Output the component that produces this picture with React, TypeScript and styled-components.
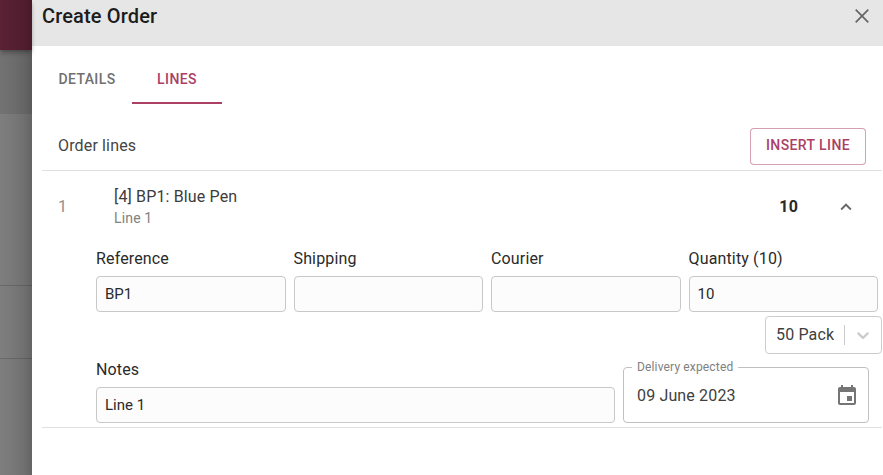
import React from "react";
import styled, { createGlobalStyle } from "styled-components";

const accent = "#ab3f66";

const GlobalStyle = createGlobalStyle`
  *, *::before, *::after { box-sizing: border-box; }
  body {
    margin: 0;
    overflow: hidden;
    font-family: Roboto, sans-serif;
    font-size: 16px;
    line-height: 24px;
    letter-spacing: 0.00938em;
    color: #2a2a2a;
  }
`;

const Screen = styled.div`
  display: grid;
  grid-template-columns: 32px 1fr;
  height: 475px;
  background: #fff;
`;

const Backdrop = styled.div`
  position: relative;
  display: flex;
  flex-direction: column;
  background: #808080;
  &::after {
    content: "";
    position: absolute;
    inset: 0;
    background: linear-gradient(90deg, rgba(0, 0, 0, 0.01), rgba(0, 0, 0, 0.07) 45%, rgba(0, 0, 0, 0.13) 75%, rgba(0, 0, 0, 0.22));
  }
`;

const AppBar = styled.div`
  height: 50px;
  flex: none;
  background: #5c2135;
  box-shadow: 0 2px 4px -1px rgba(0, 0, 0, 0.3), 0 4px 5px rgba(0, 0, 0, 0.12);
  z-index: 0;
`;

const BackdropRow = styled.div<{ $height: number; $shade?: string }>`
  flex: none;
  height: ${(p) => p.$height}px;
  background: ${(p) => p.$shade ?? "transparent"};
  border-bottom: ${(p) => (p.$shade ? "none" : "1px solid #6c6c6c")};
`;

const Drawer = styled.main`
  min-width: 0;
  display: flex;
  flex-direction: column;
`;

const Header = styled.header`
  height: 46px;
  flex: none;
  display: flex;
  justify-content: space-between;
  align-items: flex-start;
  padding: 4px 13px 0 10px;
  background: #e6e6e6;
`;

const Title = styled.h1`
  margin: 0;
  font-size: 20px;
  font-weight: 500;
  line-height: 24px;
  letter-spacing: 0.0075em;
  color: #1c1c1c;
`;

const IconButton = styled.button<{ $top?: number }>`
  display: flex;
  align-items: flex-start;
  padding: 0;
  border: 0;
  margin-top: ${(p) => p.$top ?? 0}px;
  background: none;
  color: #666;
`;

const Content = styled.div`
  padding: 10px 1px 0 10px;
`;

const Tabs = styled.nav`
  display: flex;
  height: 48px;
`;

const Tab = styled.button<{ $active?: boolean }>`
  width: 90px;
  padding: 0 0 2px;
  border: 0;
  border-top: 2px solid transparent;
  border-bottom: 2px solid ${(p) => (p.$active ? accent : "transparent")};
  background: none;
  color: ${(p) => (p.$active ? accent : "#707070")};
  font: 500 14px/18px Roboto, sans-serif;
  letter-spacing: 0.02857em;
  text-transform: uppercase;
`;

const Toolbar = styled.div`
  height: 67px;
  display: flex;
  justify-content: space-between;
  align-items: flex-start;
  padding: 23.5px 16px 0;
  border-bottom: 1px solid #e0e0e0;
`;

const ToolbarLabel = styled.span`
  padding-top: 6px;
  color: #444;
`;

const InsertButton = styled.button`
  width: 116px;
  height: 37px;
  padding: 0 0 2px;
  border: 1px solid rgba(171, 63, 102, 0.5);
  border-radius: 4px;
  background: #fff;
  color: ${accent};
  font: 500 14px/24px Roboto, sans-serif;
  letter-spacing: 0.02857em;
`;

const OrderLine = styled.section`
  height: 257px;
  border-bottom: 1px solid #e0e0e0;
`;

const Summary = styled.div`
  height: 75px;
  display: grid;
  grid-template-columns: 56px 1fr auto 22px;
  padding: 14px 25px 0 16px;
`;

const Position = styled.span`
  padding-top: 10px;
  color: #909090;
`;

const ProductName = styled.div`
  color: #3c3c3c;
`;

const ProductNote = styled.div`
  font-size: 14px;
  line-height: 18px;
  letter-spacing: 0.01071em;
  color: #828282;
`;

const Total = styled.span`
  padding: 10px 37px 0 0;
  font-weight: 700;
`;

const LineForm = styled.div`
  padding-left: 54px;
`;

const FieldGrid = styled.div`
  display: grid;
  grid-template-columns: repeat(4, 1fr);
  gap: 8px;
  padding-right: 4px;
`;

const Field = styled.label`
  display: flex;
  flex-direction: column;
  gap: 5px;
  padding-top: 1px;
  min-width: 0;
`;

const Input = styled.input`
  width: 100%;
  height: 36px;
  padding: 0 8px;
  border: 1px solid #c8c8c8;
  border-radius: 4px;
  background: #fcfcfc;
  color: #2a2a2a;
  font: 400 15px Roboto, sans-serif;
  outline: none;
`;

const PackRow = styled.div`
  display: flex;
  justify-content: flex-end;
  padding-top: 4px;
`;

const PackSelect = styled.div`
  width: 117px;
  height: 38px;
  display: flex;
  align-items: center;
  padding-left: 10px;
  border: 1px solid #ccc;
  border-radius: 4px;
  color: #404040;
`;

const SelectDivider = styled.span`
  width: 1px;
  height: 20px;
  margin: 0 8px 0 auto;
  background: #ccc;
`;

const SelectArrow = styled.span`
  display: flex;
  margin-right: 8px;
  color: #ccc;
`;

const NotesRow = styled.div`
  display: grid;
  grid-template-columns: 519px 246px;
  gap: 8px;
  align-items: end;
  padding-top: 3px;
`;

const DateField = styled.div`
  position: relative;
  height: 56px;
  display: flex;
  justify-content: space-between;
  align-items: center;
  padding: 1px 9px 0 13px;
  border: 1px solid #c0c0c0;
  border-radius: 4px;
  color: #404040;
`;

const DateLabel = styled.span`
  position: absolute;
  left: 8px;
  top: -9px;
  width: 106px;
  padding-left: 5px;
  background: #fff;
  color: #808080;
  font-size: 12px;
  line-height: 16px;
`;

const fields = [
  ["Reference", "BP1"],
  ["Shipping", ""],
  ["Courier", ""],
  ["Quantity (10)", "10"],
];

export default function App() {
  return (
    <>
      <GlobalStyle />
      <Screen>
        <Backdrop>
          <AppBar />
          <BackdropRow $height={64} $shade="#747474" />
          <BackdropRow $height={172} />
          <BackdropRow $height={73} />
        </Backdrop>
        <Drawer>
          <Header>
            <Title>Create Order</Title>
            <IconButton $top={4} aria-label="Close">
              <svg width="16" height="16" viewBox="0 0 16 16" fill="none" stroke="currentColor" strokeWidth="1.7">
                <path d="M1.7 1.7 14.3 14.3M14.3 1.7 1.7 14.3" />
              </svg>
            </IconButton>
          </Header>
          <Content>
            <Tabs>
              <Tab>Details</Tab>
              <Tab $active>Lines</Tab>
            </Tabs>
            <Toolbar>
              <ToolbarLabel>Order lines</ToolbarLabel>
              <InsertButton>INSERT LINE</InsertButton>
            </Toolbar>
            <OrderLine>
              <Summary>
                <Position>1</Position>
                <div>
                  <ProductName>[4] BP1: Blue Pen</ProductName>
                  <ProductNote>Line 1</ProductNote>
                </div>
                <Total>10</Total>
                <IconButton $top={11} aria-label="Collapse">
                  <svg width="22" height="22" viewBox="0 0 24 24" fill="currentColor">
                    <path d="m12 8-6 6 1.41 1.41L12 10.83l4.59 4.58L18 14z" />
                  </svg>
                </IconButton>
              </Summary>
              <LineForm>
                <FieldGrid>
                  {fields.map(([label, value]) => (
                    <Field key={label}>
                      {label}
                      <Input defaultValue={value} />
                    </Field>
                  ))}
                </FieldGrid>
                <PackRow>
                  <PackSelect>
                    50 Pack
                    <SelectDivider />
                    <SelectArrow>
                      <svg width="20" height="20" viewBox="0 0 20 20" fill="currentColor">
                        <path d="M4.516 7.548c0.436-0.446 1.043-0.481 1.576 0l3.908 3.747 3.908-3.747c0.533-0.481 1.141-0.446 1.574 0 0.436 0.445 0.408 1.197 0 1.615-0.406 0.418-4.695 4.502-4.695 4.502-0.217 0.223-0.502 0.335-0.787 0.335s-0.57-0.112-0.789-0.335c0 0-4.287-4.084-4.695-4.502s-0.436-1.17 0-1.615z" />
                      </svg>
                    </SelectArrow>
                  </PackSelect>
                </PackRow>
                <NotesRow>
                  <Field>
                    Notes
                    <Input defaultValue="Line 1" />
                  </Field>
                  <DateField>
                    <DateLabel>Delivery expected</DateLabel>
                    09 June 2023
                    <svg width="24" height="24" viewBox="0 0 24 24" fill="#757575">
                      <path d="M17 12h-5v5h5v-5zM16 1v2H8V1H6v2H5c-1.11 0-1.99.9-1.99 2L3 19c0 1.1.89 2 2 2h14c1.1 0 2-.9 2-2V5c0-1.1-.9-2-2-2h-1V1h-2zm3 18H5V8h14v11z" />
                    </svg>
                  </DateField>
                </NotesRow>
              </LineForm>
            </OrderLine>
          </Content>
        </Drawer>
      </Screen>
    </>
  );
}
